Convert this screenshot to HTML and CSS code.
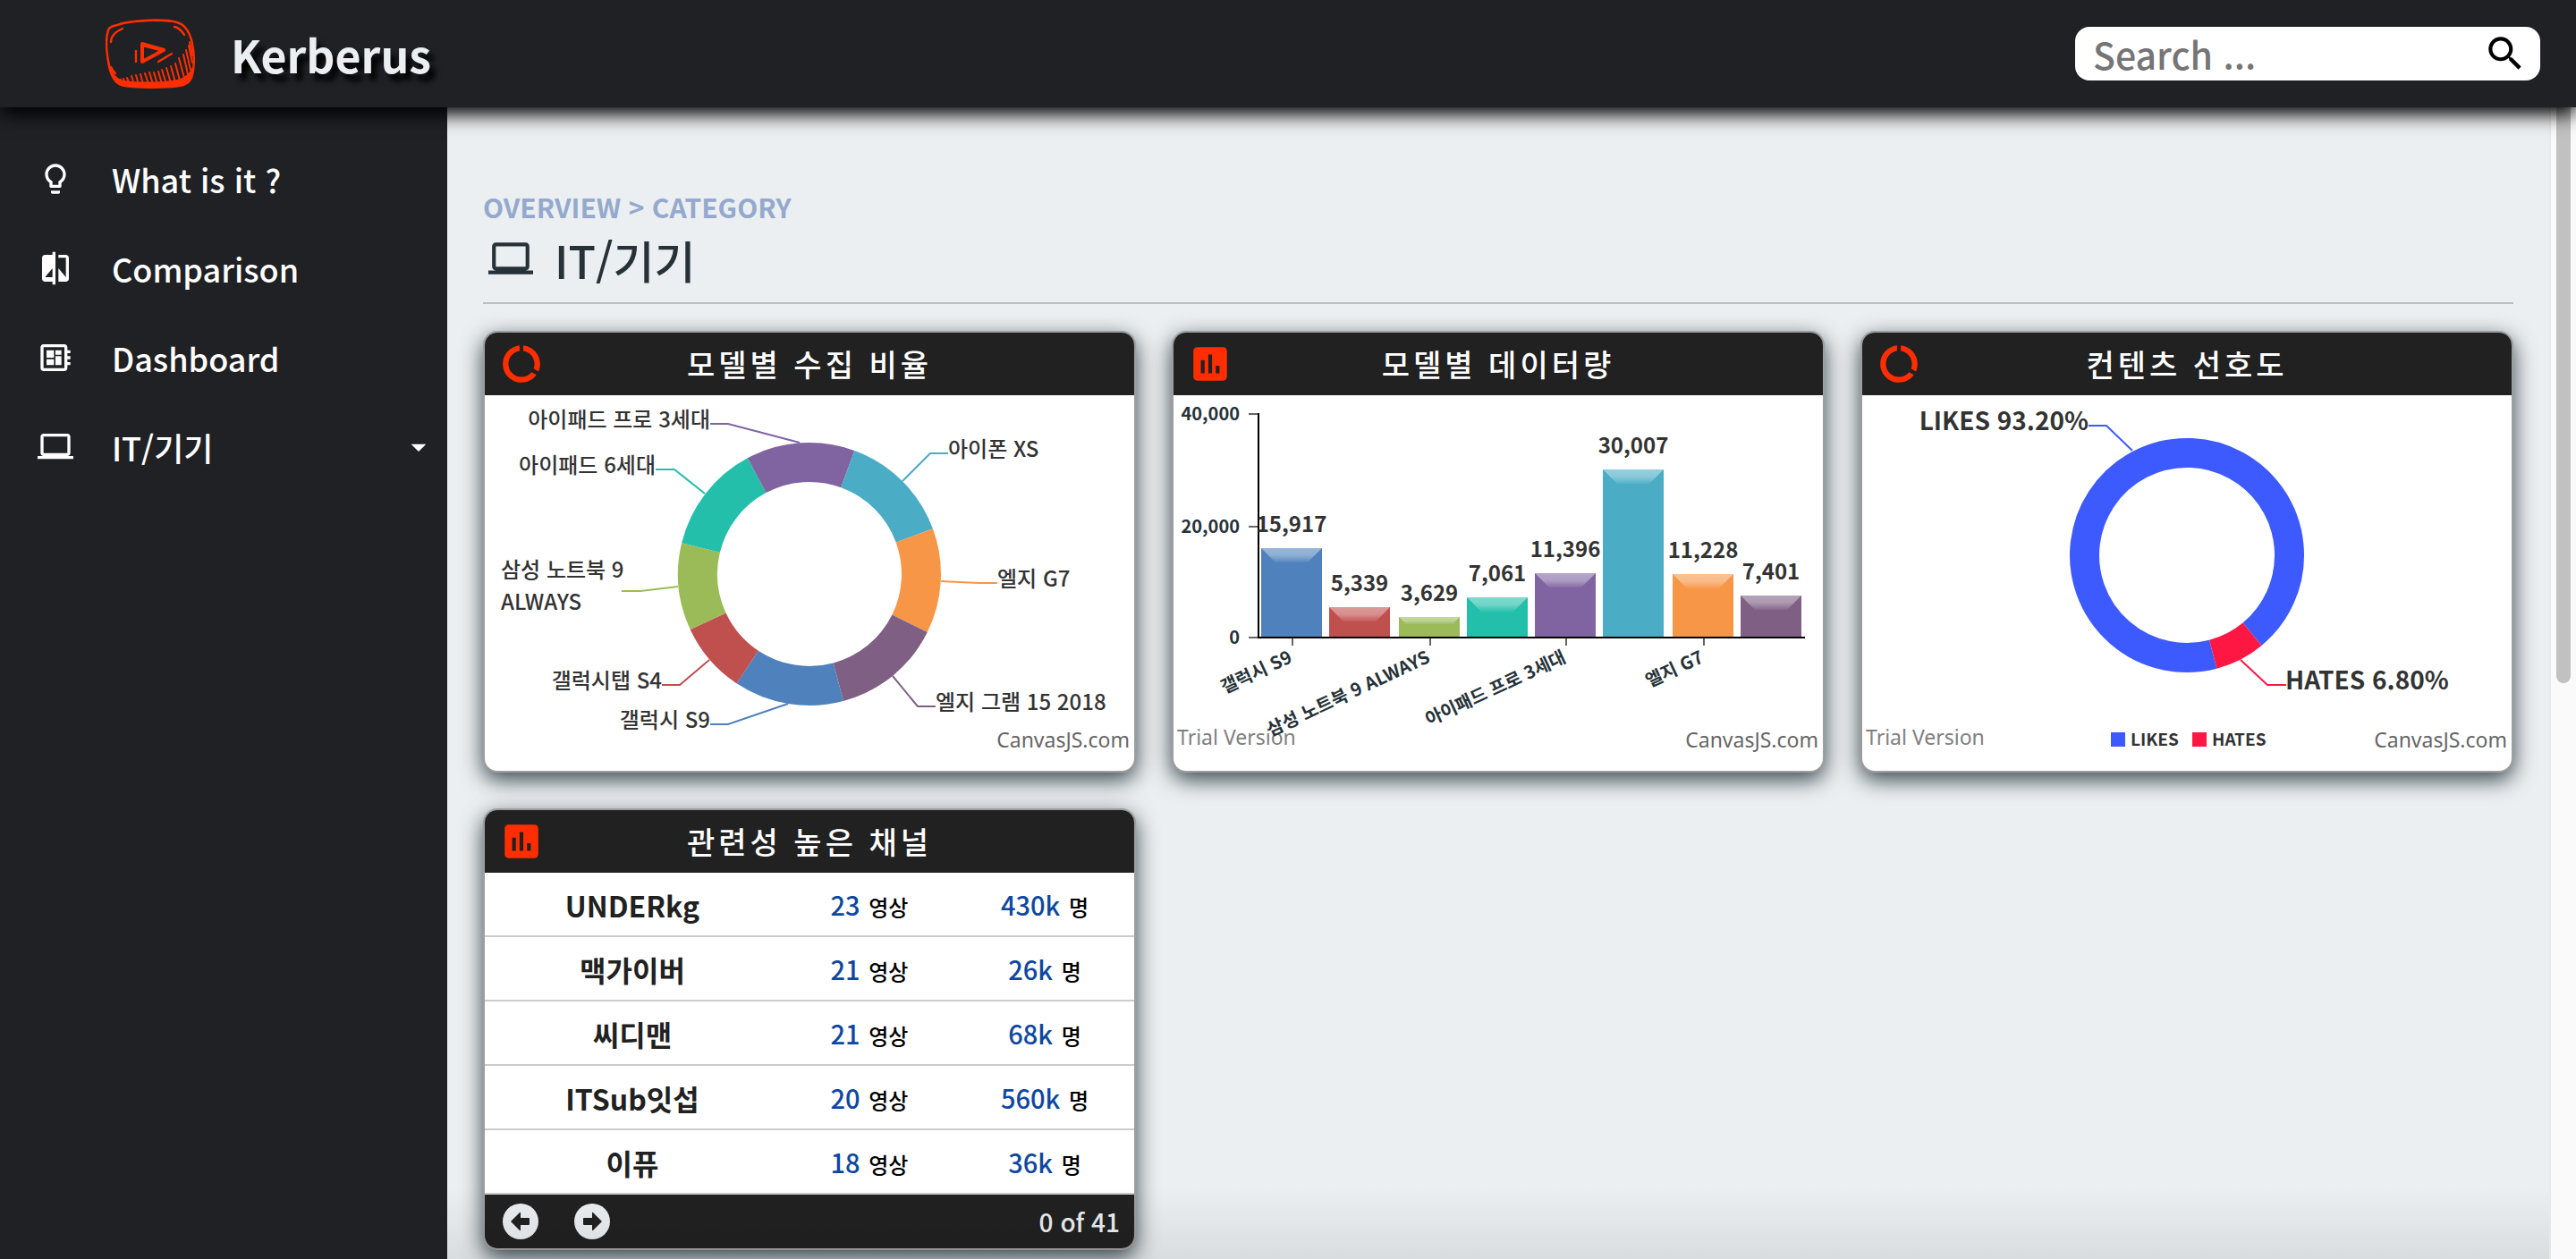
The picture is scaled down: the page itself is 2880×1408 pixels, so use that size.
FILE: index.html
```html
<!DOCTYPE html>
<html lang="ko">
<head>
  <meta charset="utf-8">
  <meta name="viewport" content="width=device-width, initial-scale=1">
  <title>Kerberus</title>
  <link rel="stylesheet" href="styles.css">
</head>
<body>
  <header class="topbar">
    <a class="brand" href="#">
      <svg class="brand-logo" viewBox="0 0 100 78" fill="none" stroke="#ff2e00" stroke-linecap="round" stroke-linejoin="round" aria-hidden="true">
        <path stroke-width="2.4" d="M13 7C30 1 66 0 80 4c10 3 15 14 17 24 3 14 2 30-1 38-4 9-13 9-22 10-18 1-38 1-52-1C10 73 6 62 4 52 1 38 0 22 3 13c1-4 5-5 10-6z"/>
        <path stroke-width="1.4" d="M17 5C34 2 60 2 78 3"/>
        <path fill="#ff2e00" stroke="none" d="M1 38c4 19 9 28 19 31 14 2 40 2 54 0 11-1 20-6 23-15 2 12-4 20-15 22-16 1-46 2-60 0C10 76 2 62 1 38z"/>
        <path stroke-width="2.4" d="M6 26c0-7 6-12 13-15M77 9c5 1 8 4 11 9M6 54c1 3 3 5 5 7"/>
        <path stroke-width="2" d="M18 72l-1-4M22 73l-2-6M27 73l-3-7M32 73l-3-9M37 73l-3-10M42 73l-3-11M48 73l-4-12M53 73l-4-13M58 73l-4-13M63 73l-4-14M68 73l-5-16M73 72l-5-17M78 71l-5-18M83 69l-5-19M88 66l-6-22M92 62l-5-22M95 57l-5-22M97 49l-4-19M97 41l-3-15"/>
        <path stroke-width="4" d="M41 29v19l24-13z"/>
        <path stroke-width="2.4" d="M34 36v12M59 48l15-9"/>
        <path stroke-width="4" d="M41 28l24 7"/>
      </svg>
      <span class="brand-name">Kerberus</span>
    </a>
    <form class="search" role="search">
      <input class="search-input" type="text" placeholder="Search ..." aria-label="Search">
      <button class="search-button" type="button" aria-label="Run search">
        <svg viewBox="0 0 24 24" aria-hidden="true"><path d="M15.5 14h-.79l-.28-.27C15.41 12.59 16 11.11 16 9.5 16 5.91 13.09 3 9.5 3S3 5.91 3 9.5 5.91 16 9.5 16c1.61 0 3.09-.59 4.23-1.57l.27.28v.79l5 4.99L20.49 19l-4.99-5zm-6 0C7.01 14 5 11.99 5 9.5S7.01 5 9.5 5 14 7.01 14 9.5 11.99 14 9.5 14z"/></svg>
      </button>
    </form>
  </header>

  <div class="shell">
    <nav class="sidebar" aria-label="Main">
      <a class="nav-item" href="#">
        <svg class="nav-icon" viewBox="0 0 24 24" aria-hidden="true"><path d="M9 21c0 .55.45 1 1 1h4c.55 0 1-.45 1-1v-1H9v1zm3-19C8.14 2 5 5.14 5 9c0 2.38 1.19 4.47 3 5.74V17c0 .55.45 1 1 1h6c.55 0 1-.45 1-1v-2.26c1.81-1.27 3-3.36 3-5.74 0-3.86-3.14-7-7-7zm2.85 11.1l-.85.6V16h-4v-2.3l-.85-.6C7.8 12.16 7 10.63 7 9c0-2.76 2.24-5 5-5s5 2.24 5 5c0 1.63-.8 3.16-2.15 4.1z"/></svg>
        <span>What is it ?</span>
      </a>
      <a class="nav-item" href="#">
        <svg class="nav-icon" viewBox="0 0 24 24" aria-hidden="true"><path d="M10 3H5c-1.1 0-2 .9-2 2v14c0 1.1.9 2 2 2h5v2h2V1h-2v2zm0 15H5l5-6v6zm9-15h-5v2h5v13l-5-6v9h5c1.1 0 2-.9 2-2V5c0-1.1-.9-2-2-2z"/></svg>
        <span>Comparison</span>
      </a>
      <a class="nav-item" href="#">
        <svg class="nav-icon" viewBox="0 0 24 24" aria-hidden="true"><path d="M22 9V7h-2V5c0-1.1-.9-2-2-2H4c-1.1 0-2 .9-2 2v14c0 1.1.9 2 2 2h14c1.1 0 2-.9 2-2v-2h2v-2h-2v-2h2v-2h-2V9h2zm-4 10H4V5h14v14zM6 13h5v4H6zm6-6h4v3h-4zM6 7h5v5H6zm6 4h4v6h-4z"/></svg>
        <span>Dashboard</span>
      </a>
      <button class="nav-item" type="button" aria-expanded="false">
        <svg class="nav-icon" viewBox="0 0 24 24" aria-hidden="true"><path d="M20 18c1.1 0 1.99-.9 1.99-2L22 5c0-1.1-.9-2-2-2H4c-1.1 0-2 .9-2 2v11c0 1.1.9 2 2 2H0v2h24v-2h-4zM4 5h16v11H4V5z"/></svg>
        <span>IT/기기</span>
        <svg class="nav-caret" viewBox="0 0 24 24" aria-hidden="true"><path d="M7 10l5 5 5-5z"/></svg>
      </button>
    </nav>

    <main class="content">
      <div class="page-head">
        <p class="breadcrumb">OVERVIEW &gt; CATEGORY</p>
        <h1 class="page-title">
          <svg class="title-icon" viewBox="0 0 24 24" aria-hidden="true"><path d="M20 18c1.1 0 1.99-.9 1.99-2L22 5c0-1.1-.9-2-2-2H4c-1.1 0-2 .9-2 2v11c0 1.1.9 2 2 2H0v2h24v-2h-4zM4 5h16v11H4V5z"/></svg>
          <span>IT/기기</span>
        </h1>
      </div>

      <div class="cards">
        <section class="card">
          <div class="card-head">
            <svg class="card-icon" viewBox="0 0 24 24" aria-hidden="true"><path d="M13 2.05v3.03c3.39.49 6 3.39 6 6.92 0 .9-.18 1.75-.48 2.54l2.6 1.53c.56-1.24.88-2.62.88-4.07 0-5.18-3.95-9.45-9-9.95zM12 19c-3.87 0-7-3.13-7-7 0-3.53 2.61-6.43 6-6.92V2.05c-5.06.5-9 4.76-9 9.95 0 5.52 4.47 10 9.99 10 3.31 0 6.24-1.61 8.06-4.09l-2.6-1.53C16.17 17.98 14.21 19 12 19z"/></svg>
            <h2 class="card-title">모델별 수집 비율</h2>
          </div>
          <svg class="chart" viewBox="0 0 726 420" role="img" aria-label="모델별 수집 비율">
            <g fill="none" stroke-width="44">
              <path stroke="#4f81bc" d="M395.3 320.7A125 125 0 0 1 293.7 304"/>
              <path stroke="#c0504e" d="M293.7 304A125 125 0 0 1 249.6 252.7"/>
              <path stroke="#9bbb58" d="M249.6 252.7A125 125 0 0 1 241.5 170.5"/>
              <path stroke="#23bfaa" d="M241.5 170.5A125 125 0 0 1 304.1 89.7"/>
              <path stroke="#8064a1" d="M304.1 89.7A125 125 0 0 1 405.8 82.6"/>
              <path stroke="#4aacc5" d="M405.8 82.6A125 125 0 0 1 480.3 156.9"/>
              <path stroke="#f79647" d="M480.3 156.9A125 125 0 0 1 475.1 255.3"/>
              <path stroke="#7f6084" d="M475.1 255.3A125 125 0 0 1 395.3 320.7"/>
            </g>
            <g fill="none" stroke-width="2">
              <path stroke="#8064a1" d="M252 32H272L352 53"/>
              <path stroke="#23bfaa" d="M191 83H212L246 110"/>
              <path stroke="#9bbb58" d="M153 219H174L216 214"/>
              <path stroke="#c0504e" d="M198 324H218L251 296"/>
              <path stroke="#4f81bc" d="M252 368H272L339 345"/>
              <path stroke="#4aacc5" d="M518 65H498L467 96"/>
              <path stroke="#f79647" d="M573 210H552L510 208"/>
              <path stroke="#7f6084" d="M504 348H484L456 314"/>
            </g>
            <g class="slice-label">
              <text x="252" y="36" text-anchor="end">아이패드 프로 3세대</text>
              <text x="191" y="87" text-anchor="end">아이패드 6세대</text>
              <text x="18" y="204">삼성 노트북 9</text>
              <text x="18" y="240">ALWAYS</text>
              <text x="198" y="328" text-anchor="end">갤럭시탭 S4</text>
              <text x="252" y="372" text-anchor="end">갤럭시 S9</text>
              <text x="518" y="69">아이폰 XS</text>
              <text x="573" y="214">엘지 G7</text>
              <text x="504" y="352">엘지 그램 15 2018</text>
            </g>
            <text class="credit" x="721" y="394" text-anchor="end">CanvasJS.com</text>
          </svg>
        </section>

        <section class="card">
          <div class="card-head">
            <svg class="card-icon" viewBox="0 0 24 24" aria-hidden="true"><path d="M19 3H5c-1.1 0-2 .9-2 2v14c0 1.1.9 2 2 2h14c1.1 0 2-.9 2-2V5c0-1.1-.9-2-2-2zM9 17H7v-7h2v7zm4 0h-2V7h2v10zm4 0h-2v-4h2v4z"/></svg>
            <h2 class="card-title">모델별 데이터량</h2>
          </div>
          <svg class="chart" viewBox="0 0 726 420" role="img" aria-label="모델별 데이터량">
            <defs>
              <linearGradient id="bevel" x1="0" y1="0" x2="0" y2="1">
                <stop offset="0" stop-color="#fff" stop-opacity=".42"/>
                <stop offset=".5" stop-color="#fff" stop-opacity=".36"/>
                <stop offset="1" stop-color="#fff" stop-opacity=".05"/>
              </linearGradient>
            </defs>
            <text class="credit trial" x="4" y="391">Trial Version</text>
            <path fill="none" stroke="#666" stroke-width="2" d="M84 21H94M84 147H94M84 271H94M133 272V280M287 272V280M439 272V280M593 272V280"/>
            <rect fill="#4f81bc" x="98" y="171" width="68" height="99"/>
            <rect fill="#c0504e" x="174" y="237" width="68" height="33"/>
            <rect fill="#9bbb58" x="252" y="248" width="68" height="22"/>
            <rect fill="#23bfaa" x="328" y="226" width="68" height="44"/>
            <rect fill="#8064a1" x="404" y="199" width="68" height="71"/>
            <rect fill="#4aacc5" x="480" y="83" width="68" height="187"/>
            <rect fill="#f79647" x="558" y="200" width="68" height="70"/>
            <rect fill="#7f6084" x="634" y="224" width="68" height="46"/>
            <g fill="url(#bevel)">
              <path d="M98 171h68l-16 16h-36z"/>
              <path d="M174 237h68l-16 16h-36z"/>
              <path d="M252 248h68l-8 8h-52z"/>
              <path d="M328 226h68l-16 16h-36z"/>
              <path d="M404 199h68l-16 16h-36z"/>
              <path d="M480 83h68l-16 16h-36z"/>
              <path d="M558 200h68l-16 16h-36z"/>
              <path d="M634 224h68l-16 16h-36z"/>
            </g>
            <path fill="none" stroke="#000" stroke-width="2" d="M95 20V271H706"/>
            <g class="axis-label" text-anchor="end">
              <text x="74" y="28">40,000</text>
              <text x="74" y="154">20,000</text>
              <text x="74" y="278">0</text>
              <text transform="translate(134 298) rotate(-25)">갤럭시 S9</text>
              <text transform="translate(288 298) rotate(-25)">삼성 노트북 9 ALWAYS</text>
              <text transform="translate(440 298) rotate(-25)">아이패드 프로 3세대</text>
              <text transform="translate(594 298) rotate(-25)">엘지 G7</text>
            </g>
            <g class="bar-label" text-anchor="middle">
              <text x="132" y="153">15,917</text>
              <text x="208" y="219">5,339</text>
              <text x="286" y="230">3,629</text>
              <text x="362" y="208">7,061</text>
              <text x="438" y="181">11,396</text>
              <text x="514" y="65">30,007</text>
              <text x="592" y="182">11,228</text>
              <text x="668" y="206">7,401</text>
            </g>
            <text class="credit" x="721" y="394" text-anchor="end">CanvasJS.com</text>
          </svg>
        </section>

        <section class="card">
          <div class="card-head">
            <svg class="card-icon" viewBox="0 0 24 24" aria-hidden="true"><path d="M13 2.05v3.03c3.39.49 6 3.39 6 6.92 0 .9-.18 1.75-.48 2.54l2.6 1.53c.56-1.24.88-2.62.88-4.07 0-5.18-3.95-9.45-9-9.95zM12 19c-3.87 0-7-3.13-7-7 0-3.53 2.61-6.43 6-6.92V2.05c-5.06.5-9 4.76-9 9.95 0 5.52 4.47 10 9.99 10 3.31 0 6.24-1.61 8.06-4.09l-2.6-1.53C16.17 17.98 14.21 19 12 19z"/></svg>
            <h2 class="card-title">컨텐츠 선호도</h2>
          </div>
          <svg class="chart" viewBox="0 0 726 420" role="img" aria-label="컨텐츠 선호도">
            <g fill="none" stroke-width="33">
              <path stroke="#3d5afe" d="M392.2 289.7A114.5 114.5 0 1 1 436 267.2"/>
              <path stroke="#ff1744" d="M436 267.2A114.5 114.5 0 0 1 392.2 289.7"/>
            </g>
            <g fill="none" stroke-width="2">
              <path stroke="#3d5afe" d="M253 34H273L302 62"/>
              <path stroke="#ff1744" d="M474 324H453L423 296"/>
            </g>
            <g class="share-label">
              <text x="253" y="39" text-anchor="end">LIKES 93.20%</text>
              <text x="473" y="329">HATES 6.80%</text>
            </g>
            <rect fill="#3d5afe" x="278" y="377" width="16" height="16"/>
            <rect fill="#ff1744" x="369" y="377" width="16" height="16"/>
            <g class="legend-label">
              <text x="300" y="392">LIKES</text>
              <text x="391" y="392">HATES</text>
            </g>
            <text class="credit trial" x="4" y="391">Trial Version</text>
            <text class="credit" x="721" y="394" text-anchor="end">CanvasJS.com</text>
          </svg>
        </section>

        <section class="card">
          <div class="card-head">
            <svg class="card-icon" viewBox="0 0 24 24" aria-hidden="true"><path d="M19 3H5c-1.1 0-2 .9-2 2v14c0 1.1.9 2 2 2h14c1.1 0 2-.9 2-2V5c0-1.1-.9-2-2-2zM9 17H7v-7h2v7zm4 0h-2V7h2v10zm4 0h-2v-4h2v4z"/></svg>
            <h2 class="card-title">관련성 높은 채널</h2>
          </div>
          <table class="channels">
            <tbody>
              <tr><th scope="row">UNDERkg</th><td><b>23</b> 영상</td><td><b>430k</b> 명</td></tr>
              <tr><th scope="row">맥가이버</th><td><b>21</b> 영상</td><td><b>26k</b> 명</td></tr>
              <tr><th scope="row">씨디맨</th><td><b>21</b> 영상</td><td><b>68k</b> 명</td></tr>
              <tr><th scope="row">ITSub잇섭</th><td><b>20</b> 영상</td><td><b>560k</b> 명</td></tr>
              <tr><th scope="row">이퓨</th><td><b>18</b> 영상</td><td><b>36k</b> 명</td></tr>
            </tbody>
          </table>
          <div class="pager">
            <button class="pager-button" type="button" aria-label="Previous">
              <svg viewBox="0 0 40 40" aria-hidden="true"><circle cx="20" cy="20" r="20"/><path class="arrow" d="M9 20L19 10q1-1 1 1v5h9q1 0 1 1v6q0 1-1 1h-9v5q0 2-1 1z"/></svg>
            </button>
            <button class="pager-button" type="button" aria-label="Next">
              <svg viewBox="0 0 40 40" aria-hidden="true"><circle cx="20" cy="20" r="20"/><path class="arrow" d="M31 20L21 10q-1-1-1 1v5h-9q-1 0-1 1v6q0 1 1 1h9v5q0 2 1 1z"/></svg>
            </button>
            <span class="pager-count">0 of 41</span>
          </div>
        </section>
      </div>
    </main>

    <div class="scroll-track" aria-hidden="true"><div class="scroll-thumb"></div></div>
  </div>
</body>
</html>
```
FILE: styles.css
```css
* {
  box-sizing: border-box;
}

body {
  margin: 0;
  min-height: 100vh;
  display: flex;
  flex-direction: column;
  background: #eceff1;
  color: #212121;
  font-family: "Noto Sans CJK KR", "Noto Sans", sans-serif;
}

button {
  border: 0;
  background: none;
  font: inherit;
  cursor: pointer;
}

svg {
  display: block;
}

/* top bar */
.topbar {
  position: relative;
  z-index: 2;
  display: flex;
  align-items: center;
  justify-content: space-between;
  height: 120px;
  padding: 0 40px 0 118px;
  background: #202125;
  box-shadow: 0 8px 20px #000;
}

.brand {
  display: flex;
  align-items: center;
  gap: 40px;
  color: #eceff1;
  text-decoration: none;
}

.brand-logo {
  width: 100px;
  height: 78px;
}

.brand-name {
  font-size: 50px;
  font-weight: 700;
  text-shadow: 6px 8px 6px #000;
}

.search {
  display: flex;
  align-items: center;
  width: 520px;
  height: 60px;
  padding: 0 14px 0 20px;
  border-radius: 16px;
  background: #fff;
}

.search-input {
  flex: 1;
  min-width: 0;
  padding: 0;
  border: 0;
  outline: 0;
  background: none;
  font-family: inherit;
  font-size: 41px;
  font-weight: 500;
  line-height: 60px;
}

.search-input::placeholder {
  color: #757575;
}

.search-button {
  width: 50px;
  padding: 0;
}

/* layout */
.shell {
  flex: 1;
  display: flex;
}

.sidebar {
  flex: 0 0 500px;
  padding-top: 30px;
  background: #202125;
}

.nav-item {
  display: flex;
  align-items: center;
  width: 100%;
  height: 100px;
  padding: 0 12px 0 42px;
  color: #fff;
  font-size: 36px;
  font-weight: 500;
  text-decoration: none;
}

.nav-icon {
  width: 40px;
  margin-right: 43px;
  fill: currentColor;
}

.nav-caret {
  width: 40px;
  margin-left: auto;
  fill: currentColor;
}

.content {
  position: relative;
  flex: 1;
  min-width: 0;
  padding: 88px 40px 10px;
}

/* shade along the lower edge of the viewport */
.content::after {
  content: "";
  position: absolute;
  inset: auto 0 0;
  height: 80px;
  background: linear-gradient(transparent, rgba(0, 0, 0, .08));
  pointer-events: none;
}

.scroll-track {
  flex: 0 0 30px;
  padding: 0 6px;
  border-left: 2px solid #e8e8e8;
  background: #fafafa;
}

.scroll-thumb {
  width: 16px;
  height: 50%;
  border-radius: 0 0 8px 8px;
  background: #c1c1c1;
}

/* page heading */
.page-head {
  padding-bottom: 12px;
  border-bottom: 2px solid #bdbdbd;
}

.breadcrumb {
  margin: 0;
  color: #94a9cd;
  font-size: 30px;
  font-weight: 700;
  line-height: 46px;
}

.page-title {
  display: flex;
  align-items: center;
  gap: 24px;
  margin: 0;
  padding-left: 6px;
  color: #263238;
  font-size: 50px;
  font-weight: 500;
  line-height: 72px;
}

.title-icon {
  width: 50px;
  fill: currentColor;
}

/* cards */
.cards {
  display: grid;
  grid-template-columns: repeat(3, 1fr);
  gap: 40px;
  padding-top: 30px;
}

.card {
  overflow: hidden;
  border: 2px solid #9e9e9e;
  border-radius: 16px;
  background: #fff;
  box-shadow: 0 8px 24px #37474f;
}

.card-head {
  display: grid;
  grid-template-columns: 50px 1fr 50px;
  align-items: center;
  height: 70px;
  padding: 0 16px;
  background: #212121;
}

.card-icon {
  width: 50px;
  fill: #ff2e00;
}

.card-title {
  margin: 0;
  color: #fff;
  font-size: 34px;
  font-weight: 500;
  letter-spacing: 4px;
  line-height: 50px;
  text-align: center;
}

/* charts */
.chart {
  width: 100%;
  height: auto;
}

.slice-label {
  fill: #333;
  font-size: 24px;
  font-weight: 500;
}

.bar-label {
  fill: #333;
  font-size: 24px;
  font-weight: 700;
}

.axis-label {
  fill: #263238;
  font-size: 20px;
  font-weight: 700;
}

.share-label {
  fill: #333;
  font-size: 28px;
  font-weight: 700;
}

.legend-label {
  fill: #333;
  font-size: 19px;
  font-weight: 700;
}

.credit {
  fill: #666;
  font-family: "Noto Sans", sans-serif;
  font-size: 23px;
}

.trial {
  fill: #808080;
}

/* channel table */
.channels {
  width: 100%;
  border-collapse: separate;
  border-spacing: 0;
  table-layout: fixed;
}

.channels th,
.channels td {
  width: 27%;
  height: 72px;
  padding: 2px 4px 0 0;
  border-bottom: 2px solid #ccc;
  color: #000;
  font-size: 24px;
  font-weight: 500;
  line-height: 48px;
  text-align: center;
}

.channels th {
  width: 46%;
  color: #212121;
  font-size: 32px;
  font-weight: 700;
}

.channels b {
  margin-right: 3px;
  color: #0d47a1;
  font-size: 29px;
  font-weight: 500;
}

.pager {
  display: flex;
  align-items: center;
  gap: 40px;
  height: 60px;
  padding: 0 16px 0 20px;
  background: #212121;
  color: #eceff1;
  font-size: 28px;
  font-weight: 500;
}

.pager-button {
  width: 40px;
  padding: 0;
  fill: #eceff1;
}

.arrow {
  fill: #212121;
}

.pager-count {
  margin-left: auto;
}
```
